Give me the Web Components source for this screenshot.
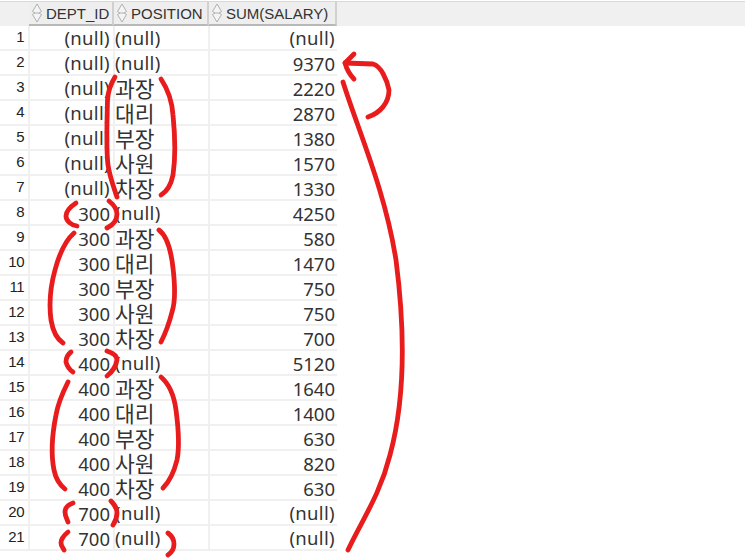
<!DOCTYPE html>
<html><head><meta charset="utf-8"><style>
html,body{margin:0;padding:0;background:#fff;overflow:hidden}
body{width:745px;height:558px;position:relative}
</style></head><body>
<result-sheet></result-sheet>
<ink-notes></ink-notes>
<script>
const DATA=[["(null)","(null)","(null)"],["(null)","(null)","9370"],["(null)","과장","2220"],["(null)","대리","2870"],["(null)","부장","1380"],["(null)","사원","1570"],["(null)","차장","1330"],["300","(null)","4250"],["300","과장","580"],["300","대리","1470"],["300","부장","750"],["300","사원","750"],["300","차장","700"],["400","(null)","5120"],["400","과장","1640"],["400","대리","1400"],["400","부장","630"],["400","사원","820"],["400","차장","630"],["700","(null)","(null)"],["700","(null)","(null)"]];
const cell=v=>v==="(null)"?`<span class="nu">${v}</span>`:/^\d+$/.test(v)?`<span class="d">${v}</span>`:`<span class="ko">${v}</span>`;
class ResultSheet extends HTMLElement{
 constructor(){super();const s=this.attachShadow({mode:"open"});
 const sort=`<svg width="12" height="20" viewBox="0 0 12 20" fill="#f4f4f4" stroke="#b0b0b0"><path d="M6 1 10.5 8.5 8 10 10.5 11.5 6 19 1.5 11.5 4 10 1.5 8.5Z"/><path d="M3.5 10H8.5"/></svg>`;
 const head=["DEPT_ID","POSITION","SUM(SALARY)"].map(h=>`<div class="hc">${sort}<span>${h}</span></div>`).join("");
 const rows=DATA.map((r,i)=>`<div class="row"><div class="n">${i+1}</div><div class="c r first">${cell(r[0])}</div><div class="c l">${cell(r[1])}</div><div class="c r">${cell(r[2])}</div></div>`).join("");
 s.innerHTML=`<style>
 :host{display:block;width:745px;height:558px;font-family:"Noto Sans","Noto Sans CJK KR",sans-serif;color:#333}
 .head{display:grid;grid-template-columns:29px 85px 95px 128px 1fr;height:24px;margin-top:1px;background:#f0f0f0;border-top:1px solid #d8d8d8}
 .hc{display:flex;align-items:center;gap:3px;padding-left:2px;background:#eeeeee;border-right:2px solid #d0d0d0;border-bottom:2px solid #b8b8b8;font:15px "Liberation Sans",sans-serif;color:#333;min-width:0;box-sizing:border-box;height:24px;white-space:nowrap}
 .head .sp{background:#f0f0f0}
 .row{display:grid;grid-template-columns:28px 85px 95px 129px;width:337px;height:25px;border-bottom:2px solid #f0f0f0;box-sizing:border-box;align-items:center;font-size:18.5px;line-height:23px}
 .n{font:15px/18px "Liberation Sans",sans-serif;letter-spacing:-.5px;text-align:right;padding-right:4px;color:#222;margin-top:-3px}
 .c{white-space:nowrap;overflow:visible;padding:0 2px;border-left:2px solid #f0f0f0;height:25px;box-sizing:border-box}
 .r{text-align:right}.l{text-align:left;padding-left:0}
 .first{padding-right:3px}
 .nu{letter-spacing:.35px}
 .d{position:relative;top:1px}
 .ko{display:inline-block;height:23px;line-height:23px;font-size:21.5px;font-family:"Noto Sans CJK KR",sans-serif;vertical-align:top}
 </style><div class="head"><div class="sp"></div>${head}<div class="sp"></div></div><div class="body">${rows}</div>`;}
}
customElements.define("result-sheet",ResultSheet);
const STROKES=[
"M115 77C110 85 108 92 107.5 100C107 120 106 150 108 165C110 178 114 188 117 197",
"M161 79C167 88 172 100 173 115C175 135 176 155 173 175C171 185 166 192 161 195",
"M76 203C70 207 66 212 66 216C66 221 71 225 77 226",
"M109 201C114 205 117 209 117 214C117 220 113 225 107 228",
"M74 233C66 240 59 255 55 270C50 288 49 305 51 320C53 332 57 339 63 343",
"M159 230C167 236 171 250 173 268C175 285 176 300 172 312C169 324 165 334 161 342",
"M71 352C67 355 66 358 66 362C67 366 70 370 73 372",
"M107 351C113 353 117 356 117 360C116 366 112 372 107 376",
"M68 382C63 392 58 403 56 415C52 435 51 455 54 470C56 480 60 485 65 489",
"M161 377C168 383 174 395 176 410C178 425 180 445 177 460C174 472 169 482 163 488",
"M73 503C67 505 65 508 65 512C65 516 67 519 68 522",
"M111 501C115 505 117 508 117 513C117 518 115 522 113 525",
"M68 532C63 536 61 539 61 543C61 546 63 548 64 550",
"M168 533C172 536 174 540 174 544C174 549 171 553 168 555",
"M354 54 345 63C347 70 350 75 354 79","M345 63 373 64C381 66 387 80 389 90C389 103 380 113 368 117",
"M343 82C358 130 385 190 396 260C405 330 405 400 390 455C380 495 362 520 348 550"];
class InkNotes extends HTMLElement{
 constructor(){super();const s=this.attachShadow({mode:"open"});
 s.innerHTML=`<style>:host{display:block;position:absolute;left:0;top:0;width:745px;height:558px;pointer-events:none}svg{display:block}</style>
 <svg width="745" height="558" viewBox="0 0 745 558" fill="none" stroke="#e81c1c" stroke-width="4.8" stroke-linecap="round" stroke-linejoin="round">${STROKES.map(d=>`<path d="${d}"/>`).join("")}</svg>`;}
}
customElements.define("ink-notes",InkNotes);
</script>
</body></html>
